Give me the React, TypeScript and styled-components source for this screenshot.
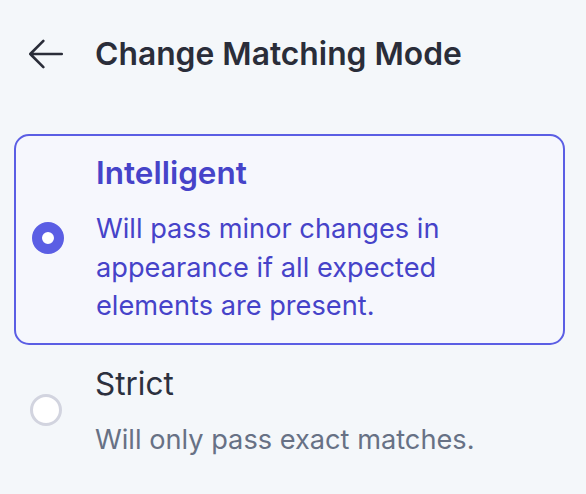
import styled, { createGlobalStyle } from "styled-components";
import { useState } from "react";

const GlobalStyle = createGlobalStyle`
  html, body {
    margin: 0;
    padding: 0;
    background: #f4f7fa;
    font-family: Inter, "Noto Sans", sans-serif;
    -webkit-font-smoothing: antialiased;
  }
`;

interface Mode {
  id: string;
  title: string;
  description: string;
}

const modes: Mode[] = [
  {
    id: "intelligent",
    title: "Intelligent",
    description:
      "Will pass minor changes in appearance if all expected elements are present.",
  },
  {
    id: "strict",
    title: "Strict",
    description: "Will only pass exact matches.",
  },
];

function BackArrow() {
  return (
    <svg
      width="42"
      height="42"
      viewBox="0 0 24 24"
      fill="none"
      stroke="currentColor"
      strokeWidth={1.5}
      strokeLinecap="round"
      strokeLinejoin="round"
    >
      <path d="M10.5 19.5L3 12m0 0l7.5-7.5M3 12h18" />
    </svg>
  );
}

function App() {
  const [selected, setSelected] = useState("intelligent");

  return (
    <Page>
      <GlobalStyle />
      <Header>
        <BackButton aria-label="Back">
          <BackArrow />
        </BackButton>
        <Heading>Change Matching Mode</Heading>
      </Header>
      <Options>
        {modes.map((mode) => {
          const active = mode.id === selected;
          return (
            <Option
              key={mode.id}
              $active={active}
              onClick={() => setSelected(mode.id)}
            >
              <Radio $active={active} />
              <Text>
                <Title $active={active}>{mode.title}</Title>
                <Description $active={active}>{mode.description}</Description>
              </Text>
            </Option>
          );
        })}
      </Options>
    </Page>
  );
}

export default App;

const Page = styled.div`
  width: 586px;
  height: 494px;
  box-sizing: border-box;
  padding: 31px 21px 0 14px;
  overflow: hidden;
`;

const Header = styled.div`
  display: flex;
  align-items: center;
  gap: 28px;
  padding-left: 11px;
  height: 46px;
`;

const BackButton = styled.button`
  display: flex;
  padding: 0;
  border: none;
  background: none;
  color: #2a2d39;
  cursor: pointer;
`;

const Heading = styled.h1`
  margin: 0;
  font-size: 31.8px;
  line-height: 46px;
  font-weight: 600;
  color: #2a2d39;
`;

const Options = styled.div`
  display: flex;
  flex-direction: column;
  margin-top: 57px;
`;

const Option = styled.div<{ $active: boolean }>`
  display: flex;
  align-items: center;
  gap: ${(p) => (p.$active ? "32px" : "33px")};
  padding: ${(p) => (p.$active ? "14px 18px 17px 16px" : "14px 18px 17px 14px")};
  border: 2px solid ${(p) => (p.$active ? "#5b5ee4" : "transparent")};
  border-radius: 15px;
  background: ${(p) => (p.$active ? "#f6f7fd" : "transparent")};
  cursor: pointer;
`;

const Radio = styled.span<{ $active: boolean }>`
  flex: none;
  box-sizing: border-box;
  width: 32px;
  height: 32px;
  border-radius: 50%;
  background: #ffffff;
  border: ${(p) => (p.$active ? "10px solid #5b5ee4" : "3px solid #d2d4df")};
`;

const Text = styled.div`
  display: flex;
  flex-direction: column;
  gap: 14px;
`;

const Title = styled.div<{ $active: boolean }>`
  font-size: 31.5px;
  line-height: 46px;
  font-weight: ${(p) => (p.$active ? 600 : 400)};
  color: ${(p) => (p.$active ? "#4643c9" : "#2c303e")};
`;

const Description = styled.div<{ $active: boolean }>`
  max-width: 420px;
  font-size: 27.2px;
  line-height: 38.6px;
  color: ${(p) => (p.$active ? "#4643c9" : "#677185")};
`;
